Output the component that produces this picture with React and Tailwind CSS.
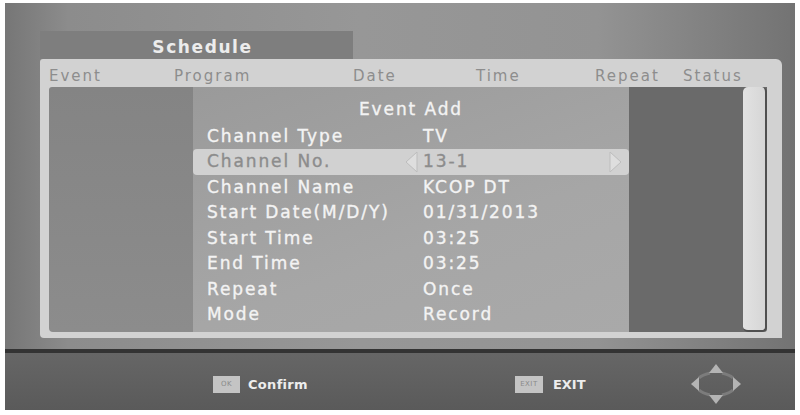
import React from 'react';

const font = { fontFamily: '"DejaVu Sans", Verdana, sans-serif' };

const columns = [
    { label: 'Event', width: 'w-[125px]' },
    { label: 'Program', width: 'w-[179px]' },
    { label: 'Date', width: 'w-[123px]' },
    { label: 'Time', width: 'w-[119px]' },
    { label: 'Repeat', width: 'w-[88px]' },
    { label: 'Status', width: 'w-[70px]' },
];

const rows = [
    { label: 'Channel Type', value: 'TV' },
    { label: 'Channel No.', value: '13-1', selected: true },
    { label: 'Channel Name', value: 'KCOP DT' },
    { label: 'Start Date(M/D/Y)', value: '01/31/2013' },
    { label: 'Start Time', value: '03:25' },
    { label: 'End Time', value: '03:25' },
    { label: 'Repeat', value: 'Once' },
    { label: 'Mode', value: 'Record' },
];

const SideArrow = ({ dir }) => (
    <svg width="13" height="22" viewBox="0 0 13 22" className="shrink-0">
        {dir === 'left' ? (
            <polygon points="12,1 1,11 12,21" fill="#dedede" stroke="#bdbdbd" strokeWidth="1" />
        ) : (
            <polygon points="1,1 12,11 1,21" fill="#dedede" stroke="#bdbdbd" strokeWidth="1" />
        )}
    </svg>
);

const NavIcon = () => (
    <svg width="52" height="42" viewBox="0 0 52 42">
        {/* faint ring between the arrows */}
        <path d="M20,10 Q12,12 9,15 M32,10 Q40,12 43,15 M9,27 Q12,30 20,32 M43,27 Q40,30 32,32" stroke="#7c7c7c" strokeWidth="3" fill="none" />
        <polygon points="26,1 19,10 33,10" fill="#b4b4b4" />
        <polygon points="26,41 19,32 33,32" fill="#b4b4b4" />
        <polygon points="1,21 9,14 9,28" fill="#b4b4b4" />
        <polygon points="51,21 43,14 43,28" fill="#b4b4b4" />
    </svg>
);

const KeyCap = ({ label, width }) => (
    <span className={`${width} h-[17px] flex items-center justify-center bg-[#c4c4c4] text-[7px] text-[#8a8a8a] tracking-[0.5px]`}>
        {label}
    </span>
);

export default function App() {
    return (
        <div className="w-[800px] h-[415px] bg-white pt-[3px] px-[5px] pb-[5px]" style={font}>
            <div className="h-full flex flex-col bg-[linear-gradient(90deg,#767676_0%,#8c8c8c_8%,#979797_45%,#939393_75%,#737373_100%)]">
                {/* Schedule window */}
                <div className="pt-[28px] pl-[35px] pr-[13px]">
                    <div className="w-[313px] h-[28px] bg-[#7e7e7e] flex items-center justify-center pl-[12px] pt-[5px]">
                        <span className="text-[17px] font-bold tracking-[1.6px] text-[#ececec]">Schedule</span>
                    </div>

                    <div className="h-[279px] bg-[#d2d2d2] rounded-tr-[6px] rounded-tl-[3px] rounded-bl-[4px] flex flex-col">
                        {/* column header */}
                        <div className="h-[28px] flex items-center pl-[9px] pt-[6px] text-[15px] tracking-[2px] text-[#8d8d8d]">
                            {columns.map((c) => (
                                <span key={c.label} className={`${c.width} shrink-0`}>{c.label}</span>
                            ))}
                        </div>

                        {/* list body */}
                        <div className="h-[245px] ml-[9px] mr-[15px] flex">
                            <div className="w-[144px] rounded-tl-[3px] rounded-bl-[4px] bg-[linear-gradient(180deg,#848484,#8c8c8c)]" />

                            {/* Event Add dialog */}
                            <div className="w-[436px] bg-[linear-gradient(160deg,#9a9a9a,#a6a6a6_60%,#a9a9a9)] flex flex-col text-[17px] tracking-[1.9px] text-[#f3f3f3] [-webkit-text-stroke:0.35px_currentColor]">
                                <div className="h-[36.5px] pt-[12px] leading-[20px] text-center">Event Add</div>
                                {rows.map((r) => (
                                    <div
                                        key={r.label}
                                        className={`h-[25.5px] shrink-0 flex items-center ${r.selected ? 'bg-[#d1d1d1] rounded-[4px] text-[#8c8c8c]' : ''}`}
                                    >
                                        <span className="w-[212px] pl-[14px] shrink-0 whitespace-nowrap">{r.label}</span>
                                        {r.selected ? (
                                            <>
                                                <SideArrow dir="left" />
                                                <span className="ml-[5px] flex-1">{r.value}</span>
                                                <SideArrow dir="right" />
                                                <span className="w-[7px]" />
                                            </>
                                        ) : (
                                            <span className="ml-[18px]">{r.value}</span>
                                        )}
                                    </div>
                                ))}
                            </div>

                            <div className="w-[114px] bg-[#6a6a6a]" />

                            {/* scrollbar */}
                            <div className="w-[24px] bg-[#6a6a6a] rounded-br-[3px]">
                                <div className="h-full rounded-[5px] bg-[linear-gradient(90deg,#e2e2e2,#d6d6d6)] border-r-2 border-b-2 border-[#505050]" />
                            </div>
                        </div>
                    </div>
                </div>

                {/* divider */}
                <div className="mt-[11px] h-[4px] bg-[#333333]" />

                {/* help bar */}
                <div className="flex-1 flex items-center pl-[208px] pt-[6px] bg-[linear-gradient(180deg,#666666,#5a5a5a)]">
                    <div className="flex items-center gap-[8px]">
                        <KeyCap label="OK" width="w-[27px]" />
                        <span className="text-[13px] font-bold tracking-[0.3px] text-[#ededed]">Confirm</span>
                    </div>
                    <div className="flex items-center gap-[10px] ml-[207px]">
                        <KeyCap label="EXIT" width="w-[28px]" />
                        <span className="text-[13px] font-bold text-[#ededed]">EXIT</span>
                    </div>
                    <div className="ml-[104px] -mt-[2px]">
                        <NavIcon />
                    </div>
                </div>
            </div>
        </div>
    );
}
